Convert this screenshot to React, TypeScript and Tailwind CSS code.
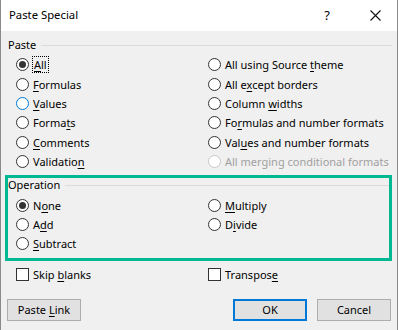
import React from "react";

const FONT = { fontFamily: '"Noto Sans", "Open Sans", sans-serif' };

function Label({ text, u, disabled }: { text: string; u?: number; disabled?: boolean }) {
  if (u === undefined) return <span className={disabled ? "text-[#a0a0a0]" : ""}>{text}</span>;
  return (
    <span className={disabled ? "text-[#a0a0a0]" : ""}>
      {text.slice(0, u)}
      <span className="underline decoration-1 underline-offset-2">{text[u]}</span>
      {text.slice(u + 1)}
    </span>
  );
}

function Radio({ checked, blue, disabled }: { checked?: boolean; blue?: boolean; disabled?: boolean }) {
  const border = disabled ? "border-[#c8c8c8]" : blue ? "border-[#0078d7]" : "border-[#333333]";
  return (
    <span className={`w-[13px] h-[13px] rounded-full border ${border} bg-white flex items-center justify-center shrink-0`}>
      {checked && <span className="w-[7px] h-[7px] rounded-full bg-[#333333]" />}
    </span>
  );
}

function RadioRow({ text, u, checked, blue, disabled, focus }: { text: string; u?: number; checked?: boolean; blue?: boolean; disabled?: boolean; focus?: boolean }) {
  return (
    <div className="h-[19.4px] flex items-center gap-[4px] whitespace-nowrap">
      <Radio checked={checked} blue={blue} disabled={disabled} />
      <span className={focus ? "outline outline-1 outline-dotted outline-black px-[1px] leading-[15px]" : "leading-[15px]"}>
        <Label text={text} u={u} disabled={disabled} />
      </span>
    </div>
  );
}

function Check({ text, u }: { text: string; u: number }) {
  return (
    <div className="h-[19px] flex items-center gap-[4px] whitespace-nowrap">
      <span className="w-[13px] h-[13px] border border-[#333333] bg-white shrink-0" />
      <Label text={text} u={u} />
    </div>
  );
}

function Button({ children, primary }: { children: React.ReactNode; primary?: boolean }) {
  return (
    <div
      className={`w-[74px] h-[22px] flex items-center justify-center bg-[#e1e1e1] whitespace-nowrap ${
        primary ? "border-2 border-[#0078d7]" : "border border-[#adadad]"
      }`}
    >
      {children}
    </div>
  );
}

export default function App() {
  return (
    <div className="w-[398px] h-[330px] bg-[#f0f0f0] border-x border-[#8a8a8a] flex flex-col text-[11px] text-black overflow-hidden" style={FONT}>
      <div className="h-[31px] bg-white flex items-center pl-[8px] shrink-0">
        <span className="text-[11.3px] flex-1">Paste Special</span>
        <span className="text-[13px] w-[20px] text-center mr-[33px]">?</span>
        <svg width="11" height="11" viewBox="0 0 11 11" className="mr-[16px]">
          <path d="M0.5 0.5 L10.5 10.5 M10.5 0.5 L0.5 10.5" stroke="#111" strokeWidth="1.1" />
        </svg>
      </div>

      <div className="flex items-center h-[16px] mt-[6px] pl-[7px] pr-[5px]">
        <span>Paste</span>
        <div className="flex-1 h-px bg-[#dcdcdc] ml-[5px]" />
      </div>
      <div className="grid grid-cols-[192px_1fr] pl-[15px] mt-[2px]">
        <div className="flex flex-col">
          <RadioRow text="All" u={0} checked focus />
          <RadioRow text="Formulas" u={0} />
          <RadioRow text="Values" u={0} blue />
          <RadioRow text="Formats" u={5} />
          <RadioRow text="Comments" u={0} />
          <RadioRow text="Validation" u={9} />
        </div>
        <div className="flex flex-col">
          <RadioRow text="All using Source theme" u={17} />
          <RadioRow text="All except borders" u={5} />
          <RadioRow text="Column widths" u={7} />
          <RadioRow text="Formulas and number formats" u={2} />
          <RadioRow text="Values and number formats" u={3} />
          <RadioRow text="All merging conditional formats" disabled />
        </div>
      </div>

      <div className="ml-[4px] mr-[5px] mt-[4px] h-[86px] border-[3px] border-[#00b993] flex flex-col shrink-0">
        <div className="flex items-center h-[14px]">
          <span>Operation</span>
          <div className="flex-1 h-px bg-[#dcdcdc] ml-[5px]" />
        </div>
        <div className="grid grid-cols-[192px_1fr] pl-[8px] mt-[3px]">
          <div className="flex flex-col">
            <RadioRow text="None" u={1} checked />
            <RadioRow text="Add" u={1} />
            <RadioRow text="Subtract" u={0} />
          </div>
          <div className="flex flex-col">
            <RadioRow text="Multiply" u={0} />
            <RadioRow text="Divide" u={1} />
          </div>
        </div>
      </div>

      <div className="grid grid-cols-[192px_1fr] pl-[15px] mt-[4px]">
        <Check text="Skip blanks" u={5} />
        <Check text="Transpose" u={8} />
      </div>

      <div className="flex items-center pl-[6px] pr-[6px] mt-[15px]">
        <Button>
          <Label text="Paste Link" u={6} />
        </Button>
        <div className="flex-1" />
        <Button primary>OK</Button>
        <div className="w-[10px]" />
        <Button>Cancel</Button>
      </div>
    </div>
  );
}
